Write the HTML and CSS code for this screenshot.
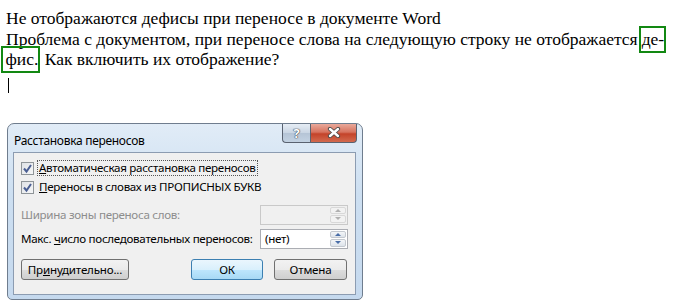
FILE: index.html
```html
<!DOCTYPE html>
<html lang="ru">
<head>
    <meta charset="UTF-8">
    <title>Расстановка переносов</title>
    <link rel="stylesheet" href="styles.css">
</head>
<body>
    <div class="page">
        <p class="question">
            Не отображаются дефисы при переносе в документе Word<br>
            Проблема с документом, при переносе слова на следующую строку не отображается<span class="mark">де-</span><br><span class="mark mark-start">фис.</span> Как включить их отображение?
        </p>
        <div class="caret"></div>

        <div class="dialog">
            <div class="titlebar">
                <span class="title">Расстановка переносов</span>
                <div class="caption-buttons">
                    <span class="cap-help">?</span>
                    <span class="cap-close">
                        <svg width="14" height="11" viewBox="0 0 14 11">
                            <path d="M3 2 L11 9 M11 2 L3 9" stroke="#4a4a4a" stroke-width="4.2" stroke-linecap="round"/>
                            <path d="M3 2 L11 9 M11 2 L3 9" stroke="#ffffff" stroke-width="2.4" stroke-linecap="round"/>
                        </svg>
                    </span>
                </div>
            </div>

            <div class="panel">
                <div class="check-row">
                    <span class="checkbox">
                        <svg width="11" height="11" viewBox="0 0 11 11"><path d="M2 5.5 L4.5 8.5 L9 2" fill="none" stroke="#4b5f93" stroke-width="2"/></svg>
                    </span>
                    <span class="check-label focused"><u>А</u>втоматическая расстановка переносов</span>
                </div>
                <div class="check-row">
                    <span class="checkbox">
                        <svg width="11" height="11" viewBox="0 0 11 11"><path d="M2 5.5 L4.5 8.5 L9 2" fill="none" stroke="#4b5f93" stroke-width="2"/></svg>
                    </span>
                    <span class="check-label"><u>П</u>ереносы в словах из ПРОПИСНЫХ БУКВ</span>
                </div>

                <div class="field-row first-field disabled">
                    <span class="field-label">Ширина зоны переноса слов:</span>
                    <div class="spin">
                        <span class="spin-value"></span>
                        <span class="spin-arrows">
                            <span class="spin-btn"><span class="arrow-up"></span></span>
                            <span class="spin-btn"><span class="arrow-down"></span></span>
                        </span>
                    </div>
                </div>
                <div class="field-row">
                    <span class="field-label">Макс. <u>ч</u>исло последовательных переносов:</span>
                    <div class="spin">
                        <span class="spin-value">(нет)</span>
                        <span class="spin-arrows">
                            <span class="spin-btn"><span class="arrow-up"></span></span>
                            <span class="spin-btn"><span class="arrow-down"></span></span>
                        </span>
                    </div>
                </div>

                <div class="button-row">
                    <button class="btn btn-force">Пр<u>и</u>нудительно...</button>
                    <button class="btn btn-ok">ОК</button>
                    <button class="btn btn-cancel">Отмена</button>
                </div>
            </div>
        </div>
    </div>
</body>
</html>
```

FILE: styles.css
```css
body {
    margin: 0;
    background: #ffffff;
}

.page {
    padding: 8px 0 0 6px;
}

.question {
    margin: 0;
    font-family: 'Liberation Serif', 'Times New Roman', serif;
    font-size: 17.5px;
    line-height: 20.5px;
    color: #000;
}

.mark {
    border: 2.5px solid #128812;
    padding: 1px 0 2px 1px;
    margin-left: 1px;
}

.mark.mark-start {
    margin-left: -5px;
    padding-left: 2.5px;
}

.caret {
    width: 1px;
    height: 15px;
    margin: 8px 0 0 2px;
    background: #000;
}

/* dialog */

.dialog {
    width: 356px;
    height: 177px;
    box-sizing: border-box;
    margin: 30px 0 0 1px;
    border: 1px solid #6f7d8e;
    border-radius: 7px 7px 5px 5px;
    background: linear-gradient(180deg, #e1ecf7 0%, #cddff1 40%, #c5d9ee 100%);
    font-family: 'Noto Sans', 'DejaVu Sans', sans-serif;
    font-size: 11.6px;
    letter-spacing: -0.3px;
    color: #000;
    display: flex;
    flex-direction: column;
}

.titlebar {
    height: 28px;
    display: flex;
    align-items: flex-start;
}

.title {
    padding: 8px 0 0 6px;
    line-height: 17px;
    font-size: 12px;
}

.caption-buttons {
    margin-left: auto;
    margin-right: 5px;
    display: flex;
}

.cap-help,
.cap-close {
    height: 19px;
    box-sizing: border-box;
    border: 1px solid #5a6270;
    border-top: none;
    display: flex;
    align-items: center;
    justify-content: center;
}

.cap-help {
    width: 28px;
    border-right: none;
    border-radius: 0 0 0 4px;
    background: linear-gradient(180deg, #e6edf5 0%, #c9d5e3 50%, #b5c4d6 51%, #c3d2e2 100%);
    color: #fff;
    font-weight: bold;
    font-size: 13px;
    text-shadow: 0 0 1px #3c4450, 0 0 1px #3c4450, 0 0 1px #3c4450;
}

.cap-close {
    width: 47px;
    border-radius: 0 0 4px 0;
    background: linear-gradient(180deg, #e9a99b 0%, #d7735f 45%, #c4432a 55%, #d26a4f 100%);
}

.panel {
    flex: 1;
    margin: 0 6px 4px 5px;
    border: 1px solid #8c9cb1;
    background: #f0f0f0;
    padding: 6px 7px 0 7px;
}

.check-row {
    height: 19px;
    display: flex;
    align-items: center;
}

.checkbox {
    width: 13px;
    height: 13px;
    box-sizing: border-box;
    border: 1px solid #8f9599;
    background: linear-gradient(135deg, #dfe2e6, #f6f7f8);
    display: flex;
    align-items: center;
    justify-content: center;
    margin-right: 3px;
}

.check-label {
    padding: 0 1px;
    line-height: 14px;
    border: 1px dotted transparent;
}

.check-label.focused {
    border-color: #555;
}

.field-row {
    height: 20px;
    display: flex;
    align-items: center;
    margin-top: 4px;
}

.field-row.first-field {
    margin-top: 8px;
}

.field-label {
    white-space: nowrap;
}

.field-row.disabled .field-label {
    color: #8d8d8d;
}

.spin {
    margin-left: auto;
    width: 88px;
    flex-shrink: 0;
    height: 20px;
    box-sizing: border-box;
    border: 1px solid #abadb3;
    background: #fff;
    display: flex;
}

.field-row.disabled .spin {
    border-color: #c9c9c9;
    background: #f0f0f0;
}

.spin-value {
    flex: 1;
    padding-left: 4px;
    line-height: 18px;
}

.spin-arrows {
    width: 16px;
    display: flex;
    flex-direction: column;
    padding: 1px;
    gap: 1px;
}

.spin-btn {
    flex: 1;
    border: 1px solid #c3c8cf;
    border-radius: 2px;
    background: linear-gradient(180deg, #f4f6f8, #dde3ea);
    display: flex;
    align-items: center;
    justify-content: center;
}

.field-row.disabled .spin-btn {
    border-color: #d8d8d8;
    background: #f2f2f2;
}

.arrow-up,
.arrow-down {
    width: 0;
    height: 0;
    border-left: 3px solid transparent;
    border-right: 3px solid transparent;
}

.arrow-up {
    border-bottom: 3px solid #4a6ea8;
}

.arrow-down {
    border-top: 3px solid #4a6ea8;
}

.field-row.disabled .arrow-up {
    border-bottom-color: #b0b0b0;
}

.field-row.disabled .arrow-down {
    border-top-color: #b0b0b0;
}

.button-row {
    display: flex;
    margin-top: 10px;
}

.btn {
    height: 21px;
    box-sizing: border-box;
    border: 1px solid #707070;
    border-radius: 3px;
    background: linear-gradient(180deg, #f2f2f2 0%, #ebebeb 50%, #dddddd 51%, #cfcfcf 100%);
    font-family: inherit;
    font-size: 11.6px;
    letter-spacing: -0.2px;
    color: #000;
    padding: 0;
    line-height: 17px;
}

.btn-force {
    width: 108px;
}

.btn-ok {
    width: 72px;
    margin-left: auto;
    border-color: #3c7fb1;
    background: linear-gradient(180deg, #eaf6fd 0%, #d9f0fc 50%, #bee6fd 51%, #a7d9f5 100%);
}

.btn-cancel {
    width: 73px;
    margin-left: 11px;
    margin-right: 1px;
}
```
